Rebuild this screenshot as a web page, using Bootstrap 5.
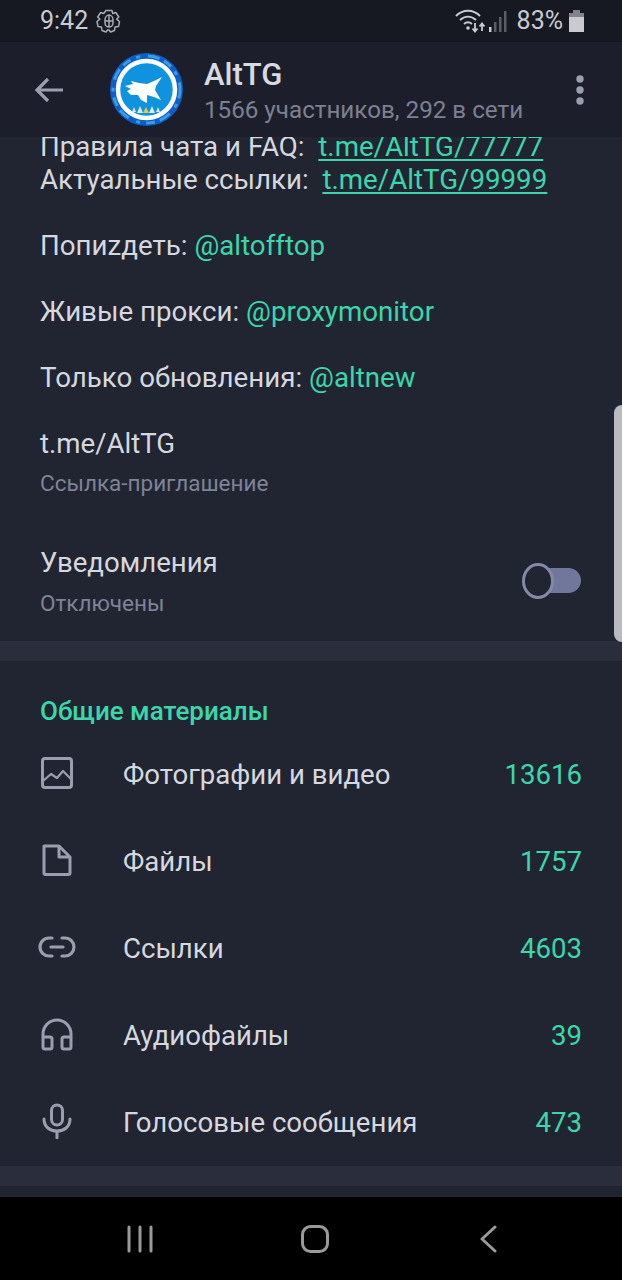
<!DOCTYPE html>
<html lang="ru">
<head>
  <meta charset="UTF-8">
  <title>AltTG</title>
  <link href="https://cdn.jsdelivr.net/npm/bootstrap@5.3.0/dist/css/bootstrap.min.css" rel="stylesheet">
  <style>
    body { width: 622px; height: 1280px; overflow: hidden; background: #212532; font-family: Roboto, sans-serif; color: #d6d8df; font-size: 27.6px; }
    .phone { width: 622px; height: 1280px; overflow: hidden; }
    .status-bar { height: 42px; background: #161922; color: #c9cbd1; padding: 0 38px 0 40px; font-size: 25px; }
    .status-signal { margin-right: 10px; }
    .status-battery { margin-left: 6px; }
    .app-bar { height: 95px; background: #1c1f2b; z-index: 2; padding: 0 37px 0 34px; }
    .app-avatar { margin-left: 46px; margin-right: 21px; }
    .app-title { font-size: 31px; font-weight: 500; line-height: 34px; color: #d8dae0; margin-top: 5px; }
    .app-sub { font-size: 24.2px; line-height: 34px; color: #7c8092; margin-top: 1px; }
    .scroll-area { height: 1067px; overflow: hidden; margin-top: -7px; }
    .bio { padding: 0 40px; line-height: 33px; margin: 0; font-size: 27.7px; }
    .bio a, .row-count { color: #3cd6ab; }
    .bio a { text-decoration: none; }
    .bio a.plain-link { text-decoration: underline; text-underline-offset: 3px; text-decoration-thickness: 1.5px; }
    .info-row { padding: 0 40px; }
    .info-title { line-height: 32px; }
    .info-sub { font-size: 22.5px; line-height: 30px; color: #7e8397; margin-top: 9px; }
    .invite-row { margin-top: 34px; }
    .invite-row .info-sub { margin-top: 8px; }
    .notify-row { margin-top: 49px; }
    .toggle-track { width: 45px; height: 25px; border-radius: 13px; background: #71779a; margin-right: 1px; margin-top: -4px; }
    .toggle-thumb { left: -14px; top: -5.5px; width: 32px; height: 36px; border: 3.5px solid #8389a6; border-radius: 50%; background: #212532; }
    .gap-bar { height: 20px; background: #2a2d3c; }
    .gap-first { margin-top: 23px; }
    .media-heading { color: #3cd6ab; font-weight: 500; font-size: 26px; line-height: 30px; padding: 35px 40px 0; }
    .media-row { height: 87px; padding: 0 40px; }
    .media-icon { width: 34px; margin-right: 49px; margin-top: -4px; }
    .media-list { margin-top: 5px; }
    .nav-bar { height: 83px; background: #000; padding: 0 125px 0 126px; }
    .nav-home { margin-right: 4px; }
    .scroll-thumb { right: 0; top: 405px; width: 8px; height: 237px; background: #b9bbc1; border-radius: 8px 0 0 8px; z-index: 3; }
  </style>
</head>
<body>
  <div class="phone position-relative">
    <div class="scroll-thumb position-absolute"></div>

    <div class="status-bar d-flex align-items-center justify-content-between">
      <div class="d-flex align-items-center gap-2">
        <span>9:42</span>
        <svg width="26" height="26" viewBox="0 0 26 26" fill="none" stroke="#a9abb2" stroke-width="1.5" stroke-linejoin="round">
          <path d="M10 2.500h6l.8 3 3-1 3 4.500-2.200 2.200 2.900 2.300-1 5-3.500.5-.5 3.500-4 1.500-1.500-2h-1.500l-1.500 2-4-1.500-.5-3.500-3.500-.5-1-5 2.900-2.300-2.200-2.200 3-4.500 3 1z"/>
          <path d="M9 12c0-3 2-5 4-5s4 2 4 5v3c0 2.500-2 4-4 4s-4-1.500-4-4zM13 7v12M9 13h8"/>
        </svg>
      </div>
      <div class="d-flex align-items-center">
        <svg width="34" height="24" viewBox="0 0 34 24" fill="none" stroke="#c9cbd1" stroke-width="2">
          <path d="M1 7c7-7 17-7 24 0M5 11c5-4.500 11-4.500 16 0M9 15c3-2.500 5-2.500 8 0"/>
          <circle cx="13" cy="19" r="1.800" fill="#c9cbd1" stroke="none"/>
          <path d="M20 14v8M17.500 19.500l2.500 3 2.500-3M27 22v-7M24.500 17.500l2.500-3 2.500 3" stroke-width="1.800"/>
        </svg>
        <svg class="status-signal" width="18" height="24" viewBox="0 0 18 24">
          <rect x="0" y="18" width="2.500" height="5" fill="#c9cbd1"/>
          <rect x="5" y="13" width="2.500" height="10" fill="#5a5d66"/>
          <rect x="10" y="8" width="2.500" height="15" fill="#5a5d66"/>
          <rect x="15" y="2" width="2.500" height="21" fill="#5a5d66"/>
        </svg>
        <span>83%</span>
        <svg class="status-battery" width="15" height="24" viewBox="0 0 15 24" fill="#c9cbd1">
          <rect x="4" y="1" width="7" height="3" fill="#80838a"/>
          <rect x="0" y="4" width="15" height="4" fill="#80838a"/>
          <rect x="0" y="8" width="15" height="15"/>
        </svg>
      </div>
    </div>

    <div class="app-bar d-flex align-items-center position-relative">
      <svg width="30" height="28" viewBox="0 0 30 28" fill="none" stroke="#9a9eae" stroke-width="3.200">
        <path d="M29 14H3M14 3L3 14l11 11"/>
      </svg>
      <svg class="app-avatar" width="73" height="73" viewBox="0 0 73 73">
        <circle cx="36.500" cy="36.500" r="36.500" fill="#0c5fc6"/>
        <circle cx="36.500" cy="36.500" r="33.500" fill="none" stroke="#3a9ce6" stroke-width="3" stroke-dasharray="9 6 4 8 12 5"/>
        <circle cx="36.500" cy="36.500" r="28.500" fill="#0f93df" stroke="#fff" stroke-width="4.500"/>
        <path d="M52 24L46 33 45 37 51 47 44 44 37 42 37 50 31 47 28 42 21 42 17 38 21 36 15 33 23 31 21 28 29 30 37 31 44 28z" fill="#fff"/>
        <path d="M22 59l2-5 2 5zM27 60l3-7 3 7zM39 60l3-7 3 7zM46 59l2-5 2 5z" fill="#dfe9ef"/>
        <path d="M33 60l3-6 3 6z" fill="#e6c64a"/>
      </svg>
      <div class="flex-grow-1">
        <div class="app-title">AltTG</div>
        <div class="app-sub">1566 участников, 292 в сети</div>
      </div>
      <svg width="10" height="30" viewBox="0 0 10 30" fill="#9a9eae">
        <circle cx="5" cy="4" r="3.700"/>
        <circle cx="5" cy="15" r="3.700"/>
        <circle cx="5" cy="26" r="3.700"/>
      </svg>
    </div>

    <div class="scroll-area">
      <p class="bio">
        Правила чата и FAQ:&nbsp; <a class="plain-link" href="#">t.me/AltTG/77777</a><br>
        Актуальные ссылки:&nbsp; <a class="plain-link" href="#">t.me/AltTG/99999</a><br>
        <br>
        Попиzдеть: <a href="#">@altofftop</a><br>
        <br>
        Живые прокси: <a href="#">@proxymonitor</a><br>
        <br>
        Только обновления: <a href="#">@altnew</a>
      </p>

      <div class="info-row invite-row">
        <div class="info-title">t.me/AltTG</div>
        <div class="info-sub">Ссылка-приглашение</div>
      </div>

      <div class="info-row notify-row d-flex align-items-center justify-content-between">
        <div>
          <div class="info-title">Уведомления</div>
          <div class="info-sub">Отключены</div>
        </div>
        <div class="toggle-track position-relative">
          <div class="toggle-thumb position-absolute"></div>
        </div>
      </div>

      <div class="gap-bar gap-first"></div>

      <div class="media-heading">Общие материалы</div>
      <div class="media-list">
        <div class="media-row d-flex align-items-center">
          <div class="media-icon d-flex justify-content-center">
            <svg class="flex-shrink-0" width="34" height="34" viewBox="0 0 34 34" fill="none" stroke="#9a9eae" stroke-width="3" stroke-linejoin="round">
              <rect x="2.500" y="2.500" width="29" height="29" rx="2.500"/>
              <path d="M3 25l8-7 6 4 6-7 8 8" stroke-width="2.200"/>
            </svg>
          </div>
          <span class="flex-grow-1">Фотографии и видео</span>
          <span class="row-count">13616</span>
        </div>
        <div class="media-row d-flex align-items-center">
          <div class="media-icon d-flex justify-content-center">
            <svg class="flex-shrink-0" width="34" height="34" viewBox="0 0 34 34" fill="none" stroke="#9a9eae" stroke-width="3" stroke-linejoin="round">
              <path d="M4 3h15l11 11v16a1.500 1.500 0 0 1-1.500 1.500h-23A1.500 1.500 0 0 1 4 30z"/>
              <path d="M19 3v11h11"/>
            </svg>
          </div>
          <span class="flex-grow-1">Файлы</span>
          <span class="row-count">1757</span>
        </div>
        <div class="media-row d-flex align-items-center">
          <div class="media-icon d-flex justify-content-center">
            <svg class="flex-shrink-0" width="38" height="24" viewBox="0 0 38 24" fill="none" stroke="#9a9eae" stroke-width="3.200" stroke-linecap="round">
              <path d="M14 3H11a9 9 0 0 0 0 18h3M24 3h3a9 9 0 0 1 0 18h-3M13 12h12"/>
            </svg>
          </div>
          <span class="flex-grow-1">Ссылки</span>
          <span class="row-count">4603</span>
        </div>
        <div class="media-row d-flex align-items-center">
          <div class="media-icon d-flex justify-content-center">
            <svg class="flex-shrink-0" width="34" height="34" viewBox="0 0 34 34" fill="none" stroke="#9a9eae" stroke-width="3" stroke-linejoin="round">
              <path d="M3 21v-4a14 14 0 0 1 28 0v4"/>
              <rect x="3" y="20" width="9" height="12" rx="2"/>
              <rect x="22" y="20" width="9" height="12" rx="2"/>
            </svg>
          </div>
          <span class="flex-grow-1">Аудиофайлы</span>
          <span class="row-count">39</span>
        </div>
        <div class="media-row d-flex align-items-center">
          <div class="media-icon d-flex justify-content-center">
            <svg class="flex-shrink-0" width="30" height="36" viewBox="0 0 30 36" fill="none" stroke="#9a9eae" stroke-width="3" stroke-linecap="round">
              <rect x="9.500" y="2" width="11" height="20" rx="5.500"/>
              <path d="M2 16c0 8 6 12 13 12s13-4 13-12M15 28v7"/>
            </svg>
          </div>
          <span class="flex-grow-1">Голосовые сообщения</span>
          <span class="row-count">473</span>
        </div>
      </div>
      <div class="gap-bar"></div>
    </div>

    <div class="nav-bar d-flex align-items-center justify-content-between">
      <svg width="28" height="28" viewBox="0 0 28 28" fill="none" stroke="#9a9a9a" stroke-width="3" stroke-linecap="round">
        <path d="M3 2v24M14 2v24M25 2v24"/>
      </svg>
      <svg class="nav-home" width="28" height="28" viewBox="0 0 28 28" fill="none" stroke="#9a9a9a" stroke-width="3">
        <rect x="1.500" y="1.500" width="25" height="25" rx="8"/>
      </svg>
      <svg width="18" height="28" viewBox="0 0 18 28" fill="none" stroke="#9a9a9a" stroke-width="3" stroke-linecap="round" stroke-linejoin="round">
        <path d="M16 2L3 14l13 12"/>
      </svg>
    </div>
  </div>
</body>
</html>
